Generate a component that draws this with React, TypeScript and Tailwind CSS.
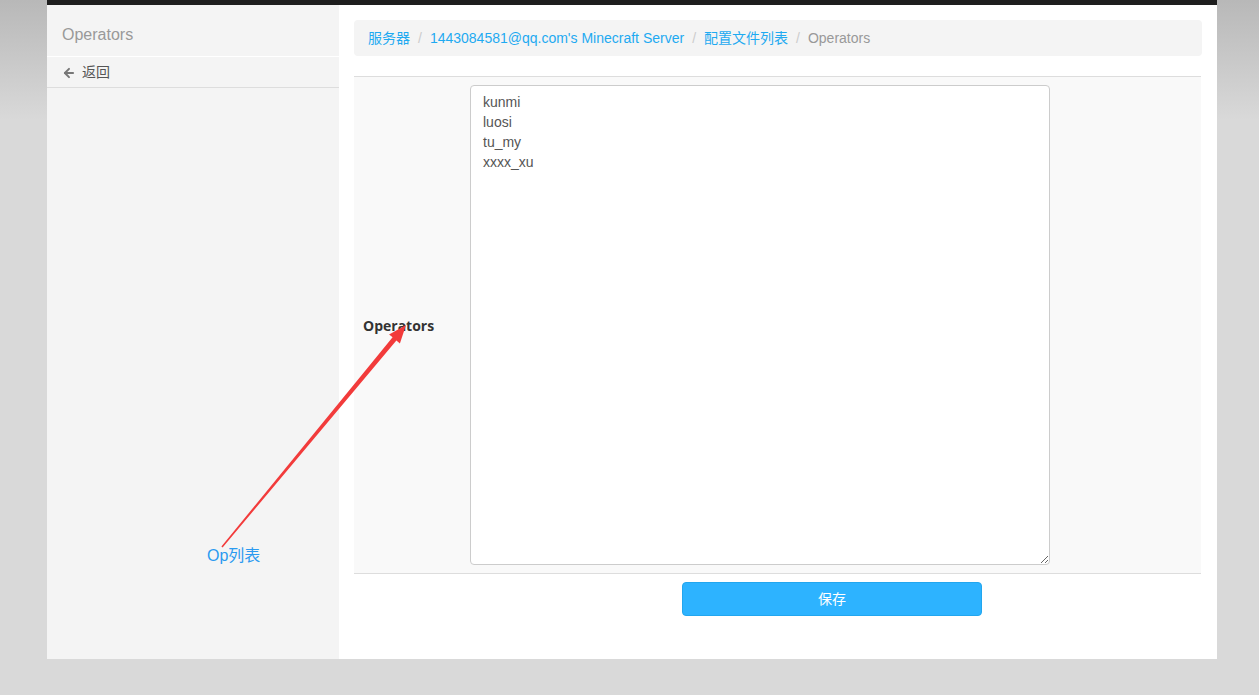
import { ArrowLeft } from 'lucide-react'

const crumbs = ['服务器', "1443084581@qq.com's Minecraft Server", '配置文件列表']
const ops = ['kunmi', 'luosi', 'tu_my', 'xxxx_xu']

export default function App() {
  return (
    <div className="relative min-h-[695px] bg-[#d9d9d9] font-['Liberation_Sans','Noto_Sans_CJK_SC',sans-serif] overflow-hidden">
      {/* soft shadow around the top of the page */}
      <div className="absolute left-0 right-0 top-0 h-[120px] bg-gradient-to-b from-[#b8b8b8] to-[#d9d9d9]" />
      <div className="relative ml-[47px] w-[1170px]">
        <div className="h-[5px] bg-[#1e1e1e]" />
        <div className="flex h-[654px]">
          <div className="w-[292px] bg-[#f4f4f4]">
            <div className="flex h-[52px] items-center border-b border-white pl-[15px] pt-[8px] text-[16px] font-light text-[#999]">
              Operators
            </div>
            <div className="flex h-[31px] items-center gap-[6px] border-b border-[#dddddd] pl-[15px] pt-[1px] text-[14px] text-[#555]">
              <ArrowLeft size={14} strokeWidth={3.4} className="text-[#777]" />
              <span>返回</span>
            </div>
          </div>
          <div className="flex-1 bg-white px-[15px] pt-[15px]">
            <div className="flex h-[36px] items-center rounded-[4px] bg-[#f4f4f4] pl-[14px] text-[14px]">
              {crumbs.map((c) => (
                <span key={c} className="flex items-center">
                  <span className="text-[#1eaaf1]">{c}</span>
                  <span className="px-[8px] text-[#cccccc]">/</span>
                </span>
              ))}
              <span className="text-[#999]">Operators</span>
            </div>
            <div className="mt-[20px] w-[847px] border-t border-b border-[#dddddd] bg-[#f9f9f9]">
              <div className="flex">
                <div className="flex w-[116px] items-center pl-[9px] font-['Open_Sans',sans-serif] text-[14px] font-bold text-[#333]">
                  Operators
                </div>
                <div className="py-[8px]">
                  <textarea
                    className="block h-[480px] w-[580px] resize-y rounded-[4px] border border-[#cccccc] bg-white px-[12px] py-[6px] text-[14px] leading-[20px] text-[#555] outline-none"
                    defaultValue={ops.join('\n')}
                  />
                </div>
              </div>
            </div>
            <div className="pt-[8px]">
              <button className="ml-[328px] h-[34px] w-[300px] rounded-[4px] border border-[#22a6ee] bg-[#2db3ff] text-[14px] text-white">
                保存
              </button>
            </div>
          </div>
        </div>
      </div>

      {/* annotation */}
      <div className="absolute left-[207px] top-[544px] text-[16px] text-[#2b9af0]">Op列表</div>
      <svg className="absolute left-0 top-0" width="1259" height="695">
        <polygon
          points="221.4,546.5 392.6,337.3 389.1,334.4 406,325 399.9,343.4 396.4,340.5 222.6,547.5"
          fill="#f23b3b"
        />
      </svg>
    </div>
  )
}
